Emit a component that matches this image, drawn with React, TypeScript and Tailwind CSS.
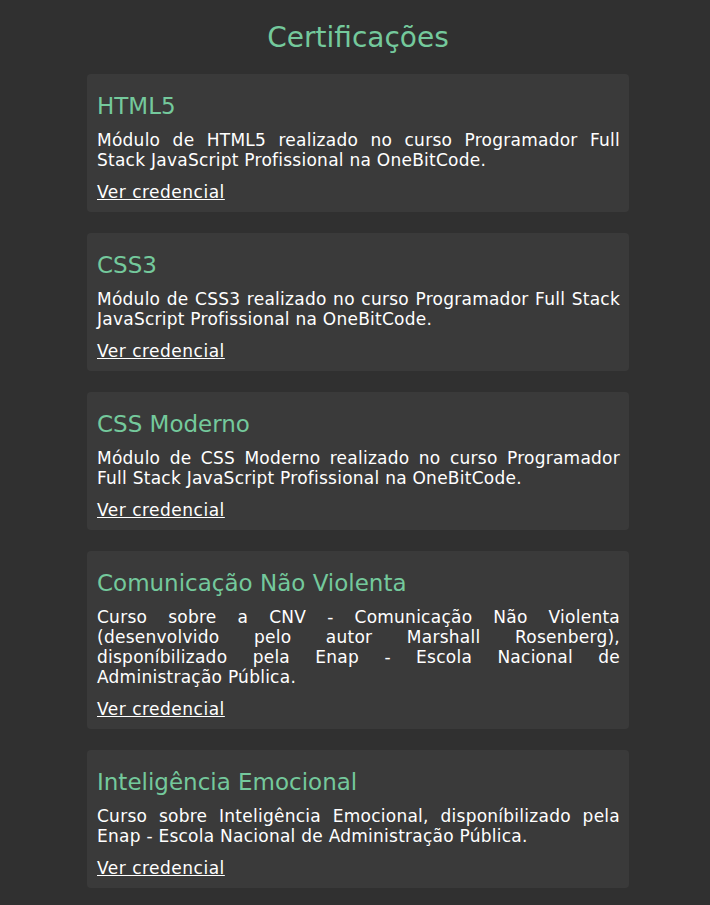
import React from 'react';

const certificados = [
  {
    title: 'HTML5',
    text: 'Módulo de HTML5 realizado no curso Programador Full Stack JavaScript Profissional na OneBitCode.',
  },
  {
    title: 'CSS3',
    text: 'Módulo de CSS3 realizado no curso Programador Full Stack JavaScript Profissional na OneBitCode.',
  },
  {
    title: 'CSS Moderno',
    text: 'Módulo de CSS Moderno realizado no curso Programador Full Stack JavaScript Profissional na OneBitCode.',
  },
  {
    title: 'Comunicação Não Violenta',
    text: 'Curso sobre a CNV - Comunicação Não Violenta (desenvolvido pelo autor Marshall Rosenberg), disponíbilizado pela Enap - Escola Nacional de Administração Pública.',
  },
  {
    title: 'Inteligência Emocional',
    text: 'Curso sobre Inteligência Emocional, disponíbilizado pela Enap - Escola Nacional de Administração Pública.',
  },
];

const App = () => {
  return (
    <main className="min-h-[905px] bg-[#303030] font-['DejaVu_Sans',sans-serif] pb-[17px]">
      <div className="ml-[87px] w-[542px]">
        <h2 className="pt-[20px] pb-[18px] text-center text-[28px] leading-[36px] text-[#74c99c]">
          Certificações
        </h2>
        <section className="flex flex-col gap-[21px]">
          {certificados.map((cert, index) => (
            <article key={index} className="rounded bg-[#3a3a3a] pl-[10px] pr-[9px] pt-[18px] pb-[10px]">
              <h3 className="text-[23px] leading-[28px] text-[#74c99c]">{cert.title}</h3>
              <p className="mt-[10px] text-justify text-[17px] leading-[20px] tracking-[0.25px] text-white">
                {cert.text}
              </p>
              <a
                href="#"
                className="mt-[12px] block w-fit text-[17px] leading-[20px] tracking-[0.5px] text-white underline"
              >
                Ver credencial
              </a>
            </article>
          ))}
        </section>
      </div>
    </main>
  );
};

export default App;
